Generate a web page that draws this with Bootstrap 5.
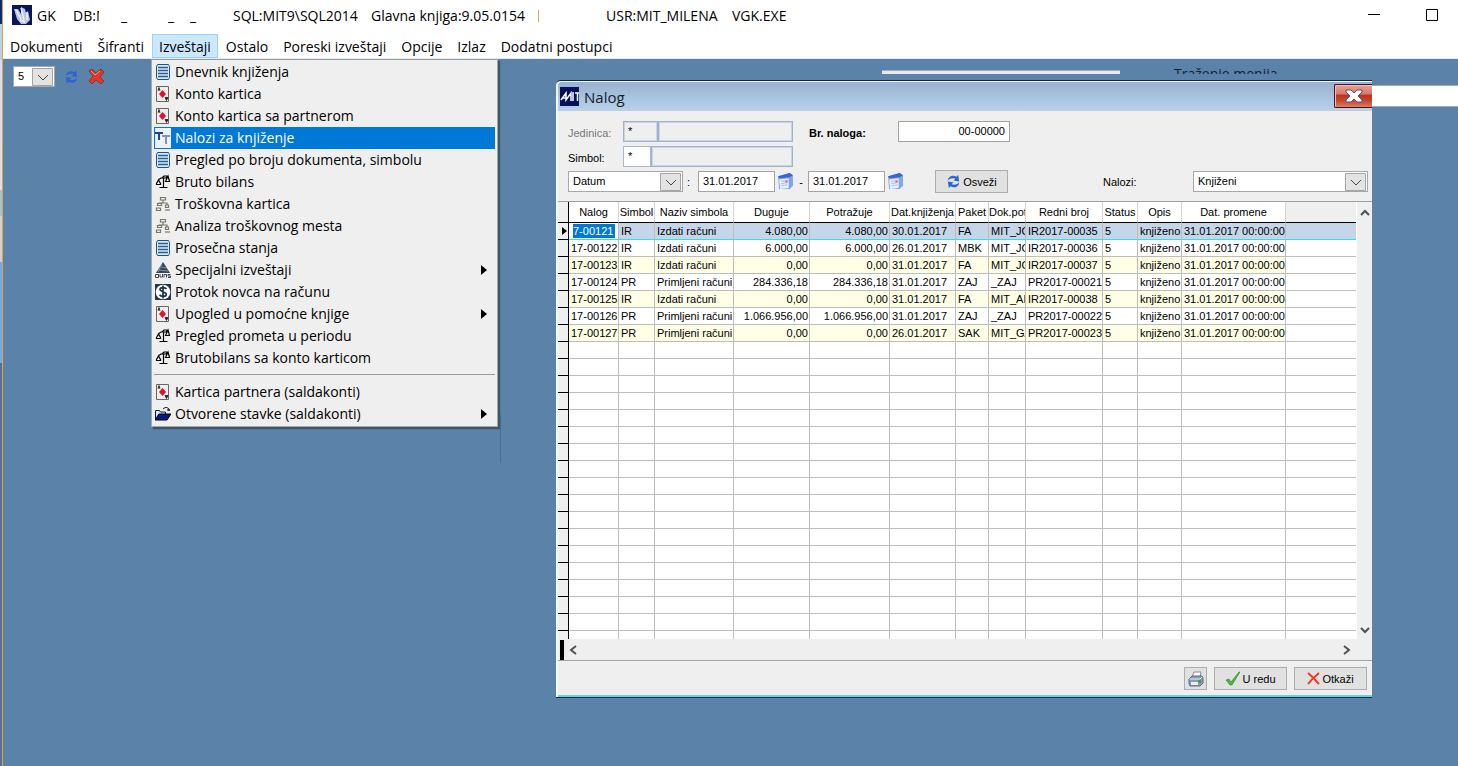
<!DOCTYPE html>
<html lang="sr-Latn">
<head>
<meta charset="utf-8">
<meta name="viewport" content="width=device-width, initial-scale=1">
<title>GK</title>
<link rel="stylesheet" href="https://cdn.jsdelivr.net/npm/bootstrap@5.3.0/dist/css/bootstrap.min.css">
<style>
:root{--desk:#5b82a8;--face:#efefef}
body{font-family:"Open Sans","Noto Sans",sans-serif;font-size:14px;line-height:20px;color:#000;background:#fff}
button,select,input{font:inherit;color:inherit;border-radius:0}
.edge{width:3px;flex:none;border-right:1px solid #d9a455;background:linear-gradient(#0b2a6b 0 24px,#c3cde0 24px 60px,#dcdcea 60px 145px,#e3e0da 145px 190px,#a8c4c8 190px 216px,#d8d0c8 216px 262px,#79a7dc 262px 363px,#5a6f8a 363px)}
.titlebar{height:34px;padding-left:9px}
.titletext{display:grid;grid-template-columns:36px 48px 47px 22px 43px 138px 167px 68px 126px auto;white-space:nowrap;padding-left:5px;padding-top:1px}
.titletext>span{overflow:hidden}
.cutoff{width:26px}
.bar-mark{width:1px;height:12px;background:#d9a455;align-self:center}
.menubar{height:25px;border-bottom:1px solid #dfeaf4;gap:1px}
.menubar button{border:1px solid transparent;background:none;padding:1px 6px 0;height:24px;line-height:22px;white-space:nowrap}
.menubar button.opened{background:#cce8ff;border-color:#99d1ff}
.desk{background:var(--desk);overflow:hidden}
.tools{padding:7px 10px;gap:7px}
.tools .drop{width:42px}
.tools button{border:0;background:none;padding:0;width:18px;height:18px;line-height:0}
.drop{appearance:none;border:1px solid #a8a8a8;background:#fff url("data:image/svg+xml,%3Csvg xmlns='http://www.w3.org/2000/svg' width='21' height='18'%3E%3Cpath d='M.5.5h20v17H.5z' fill='%23e3e3e3' stroke='%23a5a5a5'/%3E%3Cpath d='M6 7l5 5 5-5' fill='none' stroke='%23444'/%3E%3C/svg%3E") no-repeat right 1px center;height:21px;padding:0 24px 0 4px;font-size:11px;line-height:17px;font-family:"Liberation Sans",Arial,sans-serif}
.pop{position:absolute;left:148px;top:0;width:347px;z-index:5;background:var(--face);border:1px solid #a3a9af;border-top-color:#999;box-shadow:2px 2px 1px #40556a;padding:1px 2px}
.pop button{display:flex;align-items:center;width:100%;height:22px;border:0;background:none;padding:0 8px 0 1px;text-align:left;white-space:nowrap}
.pop button>svg:first-child{margin-right:4px;flex:none}
.pop button.picked{background:#0078d7;color:#fff}
.pop hr{margin:5px 0 6px;border:0;border-top:1px solid #999;opacity:1;color:#999}
.behind{position:absolute;left:879px;right:0;top:0;height:15px;overflow:hidden;font-size:14px;line-height:18px}
.behind i{width:238px;height:4px;margin-top:11px;background:#e8e8f0;border-top:1px solid #aaa;margin-right:54px}
.behind span{margin-top:6px;color:#102030}
.search{position:absolute;right:0;top:26px;width:130px;height:22px;border:1px solid #a8a8a8;border-right:0;background:#fff}
.tick{position:absolute;left:497px;top:356px;width:1px;height:48px;background:#4a6f94}
.dlg{position:absolute;left:553px;right:86px;top:21px;bottom:68px;z-index:2;background:var(--face);border:1px solid #10263f;border-left:0;border-right:0;border-top-left-radius:5px;box-shadow:inset 2px 1px #f4f8fc,inset 0 -2px #66d4df;padding:1px 0 2px 2px;font-family:"Liberation Sans",Arial,sans-serif;font-size:11px;line-height:16px}
.dlg header{height:29px;flex:none;background:linear-gradient(#98b2d0,#b9d1ea);border-top-left-radius:4px;font:15px/20px "Open Sans","Noto Sans",sans-serif;color:#14202e;padding-left:2px}
.dlg header h1{font:inherit;margin:0 0 0 5px}
.closer{margin:2px 0 4px auto;width:38px;height:24px;border:1px solid #431422;border-right:0;border-radius:2px 0 0 2px;background:linear-gradient(#e9a396,#d9766a 42%,#bb3322 45%,#c5452d 70%,#dd7b5c);padding:0;line-height:0;box-shadow:inset 1px 1px #f3c0b6}
.ask{padding:10px 4px 9px 10px}
.ask input{height:21px;border:1px solid #a3a3a3;padding:0 4px 2px;background:#fff}
.ask input.flat{background:var(--face);border:1px solid #9fb2c8;box-shadow:inset 0 0 0 1px #c9d5e2}
.ask input.thin{border-color:#aab8c8}
.caption{width:55px;flex:none;padding-top:4px}
.btn-old{border:1px solid #adadad;background:#e1e1e1;padding:0;height:23px;display:flex;align-items:center;justify-content:center;gap:2px}
.gridbox{min-height:0;overflow:hidden;background:#fff;border-top:1px solid #a0a0a0}
.gridbox table{table-layout:fixed;border-collapse:separate;border-spacing:0;width:100%;margin:0}
.gridbox th,.gridbox td{height:17px;padding:0 0 0 2px;line-height:16px;border-right:1px solid #bdbdbd;border-bottom:1px solid #bdbdbd;overflow:hidden;white-space:nowrap}
.gridbox th{height:21px;font-weight:400;text-align:center;border-bottom:1px solid #000;border-right-color:#d5d5d5;padding:0}
.gridbox th.nothing{background:var(--face)}
.gridbox tr>:first-child{background:var(--face);border-right:1px solid #000;border-bottom-color:#000;padding:0 0 0 3px;line-height:0}
.gridbox tr>:last-child{border-right:0}
.gridbox td.sum{text-align:right;padding-right:1px}
.gridbox tbody tr:nth-child(2n+1).rec>td:not(:first-child):not(:last-child){background:#ffffe6}
.gridbox tbody tr.rec.now>td:not(:first-child){background:#c6d6e9!important;border-bottom-color:#27e4ee}
.gridbox tbody tr.rec.now>td:nth-child(2){background:#fff!important;padding-left:3px}
.now span{display:block;width:42px;margin-left:1px;background:#0078d7;color:#fff;line-height:14px}
.vbar{width:15px;flex:none;background:var(--face);padding:7px 0 5px;margin-left:1px}
.hbar{height:22px;flex:none;background:var(--face);border-bottom:1px solid #a0a0a0;padding-left:2px;margin-bottom:1px}
.hbar b{width:4px;height:20px;background:#000;margin-right:5px}
.vbar button,.hbar button{border:0;background:none;padding:0;line-height:0}
.acts{padding:5px;gap:7px;flex:none}
</style>
</head>
<body>
<svg class="d-none" aria-hidden="true">
<symbol id="list" viewBox="0 0 16 16"><path d="M2.500.5h11l1 2v11l-1 2h-11l-1-2v-11z" fill="#d7e8f8" stroke="#23507f"/><path d="M3 3.500h10M3 6.500h10M3 9.500h10M3 12.500h10" stroke="#2e5e92" stroke-width="1.400"/></symbol>
<symbol id="playing" viewBox="0 0 16 16"><path d="M1.500.5h12v15h-12z" fill="#eee" stroke="#666"/><path d="M7.500 4l3.500 4-3.500 4L4 8z" fill="#e4102a"/><path d="M3 4.500l1-3 1 3M10 11.500h3l-1.500 3z" fill="#222" stroke="#222" stroke-width=".8"/></symbol>
<symbol id="scale" viewBox="0 0 16 16"><path d="M8.500 4v9M4.500 13.500h8M3 6l3-2h5l2-2M1.500 9.500L3.500 6l2 3.500v1h-4zM10.500 7.500L13 2l1.500 5.500zM7 4l2-2h3" fill="none" stroke="#000" stroke-width="1.200"/></symbol>
<symbol id="tree" viewBox="0 0 16 16"><g fill="#eee" stroke="#77786a" stroke-width="1.200"><path d="M8 4v3M4 10V7h8v3" fill="none"/><path d="M5.500 1.500h5v2.500h-5zM2.500 7.500h4v2h-4zM10.500 9h3v2.500h-3zM1.500 12h4v2.500h-4z"/><path d="M10 14h5"/></g></symbol>
<symbol id="sync" viewBox="0 0 16 16"><path d="M2 7c0-4 5-7 9-4l2-2 1 7-6-1 2-2C7 4 4 5 2 7zM14 9c0 4-5 7-9 4l-2 2-1-7 6 1-2 2c3 1 6 0 8-2z" fill="#2668d2"/></symbol>
<symbol id="cal" viewBox="0 0 16 16"><path d="M1 3l11-3 3 2v10l-3 3H2z" fill="#7fa5ea"/><path d="M1 3l11-3 3 2-3 2-10 1z" fill="#3a63d2"/><path d="M2 6l9-1v9l-8 1z" fill="#e8f0ff"/><path d="M4 8l6-1M4 10l6-1M4 12l6-1" stroke="#afc3ed"/><path d="M8 7h2v2H8z" fill="#e0696b"/></symbol>
</svg>
<div class="d-flex vh-100">
<div class="edge"></div>
<div class="d-flex flex-column flex-grow-1" style="min-width:0">
  <div class="titlebar d-flex align-items-center pb-1">
    <svg class="flex-shrink-0" width="20" height="20"><path fill="#07155c" d="M0 0h20v20H0z"/><path d="M2 4l4 0 3 5 0-7 4 2 1 4 2-2 2 9-4 4H9L5 14z" fill="#b7c4e3"/><path d="M4 5l5 9M9 3l3 12M15 7l0 8M8 15l5 2" stroke="#eef2fb" stroke-width="1.400"/></svg>
    <div class="titletext">
      <span>GK</span><span><span class="cutoff d-block overflow-hidden">DB:M</span></span><span>_</span><span>_</span><span>_</span><span>SQL:MIT9\SQL2014</span><span>Glavna knjiga:9.05.0154</span><span class="bar-mark"></span><span>USR:MIT_MILENA</span><span>VGK.EXE</span>
    </div>
    <svg class="ms-auto me-3 flex-shrink-0" width="74" height="14"><path d="M0 6.500h12M58.500 1.500h11v11h-11z" fill="none" stroke="#000"/></svg>
  </div>
  <nav class="menubar d-flex">
    <button>Dokumenti</button><button>Šifranti</button><button class="opened">Izveštaji</button><button>Ostalo</button><button>Poreski izveštaji</button><button>Opcije</button><button>Izlaz</button><button>Dodatni postupci</button>
  </nav>
  <main class="desk position-relative flex-grow-1">
    <div class="tools d-flex align-items-center">
      <select class="drop" aria-label="Broj"><option>5</option></select>
      <button aria-label="Osveži"><svg width="15" height="16"><use href="#sync"/></svg></button>
      <button aria-label="Zatvori"><svg width="17" height="17"><path d="M1 3l3-2 4 4 5-4 3 3-4 5 4 4-3 3-5-4-4 4-3-3 4-5z" fill="#e0382c" stroke="#8e2420" stroke-width=".8"/><path d="M3 3l4 4 5-4" fill="none" stroke="#f49a90"/></svg></button>
    </div>
    <div class="tick"></div>
    <div class="behind d-flex"><i></i><span>Traženje menija</span></div>
    <input class="search" aria-label="Traženje menija">

    <div class="pop">
      <button><svg width="16" height="16"><use href="#list"/></svg>Dnevnik knjiženja</button>
      <button><svg width="16" height="16"><use href="#playing"/></svg>Konto kartica</button>
      <button><svg width="16" height="16"><use href="#playing"/></svg>Konto kartica sa partnerom</button>
      <button class="picked"><svg width="16" height="20"><path fill="#eef1f8" d="M0 0h16v20H0z"/><path d="M0 4h8v2H5v6H3V6H0z" fill="#20409c"/><path d="M7 7h8v2h-3v7h-2V9H7z" fill="#7d90c8"/></svg>Nalozi za knjiženje</button>
      <button><svg width="16" height="16"><use href="#list"/></svg>Pregled po broju dokumenta, simbolu</button>
      <button><svg width="16" height="16"><use href="#scale"/></svg>Bruto bilans</button>
      <button><svg width="16" height="16"><use href="#tree"/></svg>Troškovna kartica</button>
      <button><svg width="16" height="16"><use href="#tree"/></svg>Analiza troškovnog mesta</button>
      <button><svg width="16" height="16"><use href="#list"/></svg>Prosečna stanja</button>
      <button><svg width="16" height="16"><path d="M8 0l7 11H1z" fill="#31465a"/><path d="M6 5l6 1M4 8l9 1M7 2l-4 8" stroke="#9fb0be" stroke-width=".7"/><path d="M.5 12.500v3h3v-3zM5 12v3h2.500v-3M9 15.500v-3h2.500v3M15.500 12.500H13v1.500h2.500v1.500H13" fill="none" stroke="#444"/></svg>Specijalni izveštaji<svg class="ms-auto" width="6" height="10"><path d="M0 0l6 5-6 5z"/></svg></button>
      <button><svg width="16" height="16"><path fill="#233846" d="M0 0h16v16H0z"/><circle cx="8" cy="8" r="7.300" fill="#fff"/><path d="M11.500 5C10 3 5 3.200 5 5.600S11.300 7.500 11.300 10.300 6 13 4.500 10.800M8 1.500v13" fill="none" stroke="#1c3040" stroke-width="1.700"/></svg>Protok novca na računu</button>
      <button><svg width="16" height="16"><use href="#playing"/></svg>Upogled u pomoćne knjige<svg class="ms-auto" width="6" height="10"><path d="M0 0l6 5-6 5z"/></svg></button>
      <button><svg width="16" height="16"><use href="#scale"/></svg>Pregled prometa u periodu</button>
      <button><svg width="16" height="16"><use href="#scale"/></svg>Brutobilans sa konto karticom</button>
      <hr>
      <button><svg width="16" height="16"><use href="#playing"/></svg>Kartica partnera (saldakonti)</button>
      <button><svg width="16" height="16"><path d="M.5 13.500v-9h4l1 1.500h5v2" fill="#d8e4f0" stroke="#101838"/><path d="M0 14l4-6h12l-4 6z" fill="#071a80" stroke="#000"/><path d="M8 3c2-2 4-2 6 0v2m-2-1h3" fill="none" stroke="#000"/></svg>Otvorene stavke (saldakonti)<svg class="ms-auto" width="6" height="10"><path d="M0 0l6 5-6 5z"/></svg></button>
    </div>

    <section class="dlg d-flex flex-column">
      <header class="d-flex align-items-center">
        <svg width="19" height="19"><path fill="#050f5c" d="M0 0h19v19H0z"/><path d="M1 13l5-7v7l5-7v8M13 5v9M15 6h4M17.500 6v8M3 11h5" fill="none" stroke="#fff" stroke-width="1.500"/></svg>
        <h1>Nalog</h1>
        <button class="closer" aria-label="Zatvori"><svg width="18" height="16"><path d="M1 2h5l3 3 3-3h5v2l-4 4 4 4v2h-5l-3-3-3 3H1v-2l4-4-4-4z" fill="#fff" stroke="#555566"/></svg></button>
      </header>
      <form class="ask d-flex flex-column gap-1" onsubmit="return false">
        <div class="d-flex">
          <label class="caption" for="unit" style="color:#777">Jedinica:</label>
          <input class="flat" id="unit" value="*" style="width:35px"><input class="flat" aria-label="Naziv jedinice" style="width:135px">
          <label class="fw-bold ms-3 pt-1" for="num" style="width:89px">Br. naloga:</label>
          <input class="text-end" id="num" value="00-00000" style="width:112px">
        </div>
        <div class="d-flex">
          <label class="caption" for="sym">Simbol:</label>
          <input class="thin" id="sym" value="*" style="width:28px"><input class="flat" aria-label="Naziv simbola" style="width:142px">
        </div>
        <div class="d-flex align-items-center" style="height:21px">
          <select class="drop" aria-label="Vrsta datuma" style="width:115px"><option>Datum</option></select>
          <span style="width:15px" class="ps-1">:</span>
          <input value="31.01.2017" aria-label="Od datuma" style="width:77px">
          <svg style="margin-left:2px" width="17" height="17"><use href="#cal"/></svg>
          <span class="text-center" style="width:14px">-</span>
          <input value="31.01.2017" aria-label="Do datuma" style="width:77px">
          <svg style="margin-left:2px" width="17" height="17"><use href="#cal"/></svg>
          <button class="btn-old" style="width:73px;margin-left:31px"><svg width="15" height="15"><use href="#sync"/></svg>Osveži</button>
          <label class="ms-auto" for="kind" style="width:90px">Nalozi:</label>
          <select class="drop" id="kind" style="width:175px"><option>Knjiženi</option></select>
        </div>
      </form>
      <div class="gridbox d-flex flex-grow-1">
        <div class="flex-grow-1">
        <table>
          <colgroup><col style="width:11px"><col style="width:50px"><col style="width:36px"><col style="width:79px"><col style="width:76px"><col style="width:80px"><col style="width:66px"><col style="width:33px"><col style="width:37px"><col style="width:77px"><col style="width:35px"><col style="width:44px"><col style="width:104px"><col></colgroup>
          <thead><tr><th></th><th>Nalog</th><th>Simbol</th><th>Naziv simbola</th><th>Duguje</th><th>Potražuje</th><th>Dat.knjiženja</th><th>Paket</th><th>Dok.pot</th><th>Redni broj</th><th>Status</th><th>Opis</th><th>Dat. promene</th><th class="nothing"></th></tr></thead>
          <tbody id="rows">
            <tr class="rec now"><td><svg width="6" height="8"><path d="M1 0l5 4-5 4z"/></svg></td><td><span>7-00121</span></td><td>IR</td><td>Izdati računi</td><td class="sum">4.080,00</td><td class="sum">4.080,00</td><td>30.01.2017</td><td>FA</td><td>MIT_JO</td><td>IR2017-00035</td><td>5</td><td>knjiženo</td><td>31.01.2017 00:00:00</td><td></td></tr>
            <tr class="rec"><td></td><td>17-00122</td><td>IR</td><td>Izdati računi</td><td class="sum">6.000,00</td><td class="sum">6.000,00</td><td>26.01.2017</td><td>MBK</td><td>MIT_JO</td><td>IR2017-00036</td><td>5</td><td>knjiženo</td><td>31.01.2017 00:00:00</td><td></td></tr>
            <tr class="rec"><td></td><td>17-00123</td><td>IR</td><td>Izdati računi</td><td class="sum">0,00</td><td class="sum">0,00</td><td>31.01.2017</td><td>FA</td><td>MIT_JO</td><td>IR2017-00037</td><td>5</td><td>knjiženo</td><td>31.01.2017 00:00:00</td><td></td></tr>
            <tr class="rec"><td></td><td>17-00124</td><td>PR</td><td>Primljeni računi</td><td class="sum">284.336,18</td><td class="sum">284.336,18</td><td>31.01.2017</td><td>ZAJ</td><td>_ZAJ</td><td>PR2017-00021</td><td>5</td><td>knjiženo</td><td>31.01.2017 00:00:00</td><td></td></tr>
            <tr class="rec"><td></td><td>17-00125</td><td>IR</td><td>Izdati računi</td><td class="sum">0,00</td><td class="sum">0,00</td><td>31.01.2017</td><td>FA</td><td>MIT_AN</td><td>IR2017-00038</td><td>5</td><td>knjiženo</td><td>31.01.2017 00:00:00</td><td></td></tr>
            <tr class="rec"><td></td><td>17-00126</td><td>PR</td><td>Primljeni računi</td><td class="sum">1.066.956,00</td><td class="sum">1.066.956,00</td><td>31.01.2017</td><td>ZAJ</td><td>_ZAJ</td><td>PR2017-00022</td><td>5</td><td>knjiženo</td><td>31.01.2017 00:00:00</td><td></td></tr>
            <tr class="rec"><td></td><td>17-00127</td><td>PR</td><td>Primljeni računi</td><td class="sum">0,00</td><td class="sum">0,00</td><td>26.01.2017</td><td>SAK</td><td>MIT_GA</td><td>PR2017-00023</td><td>5</td><td>knjiženo</td><td>31.01.2017 00:00:00</td><td></td></tr>
          </tbody>
        </table>
        </div>
        <div class="vbar d-flex flex-column justify-content-between align-items-center">
          <button aria-label="Gore"><svg width="10" height="7"><path d="M1 6l4-4 4 4" fill="none" stroke="#505050" stroke-width="2"/></svg></button>
          <button aria-label="Dole"><svg width="10" height="7"><path d="M1 1l4 4 4-4" fill="none" stroke="#505050" stroke-width="2"/></svg></button>
        </div>
      </div>
      <div class="hbar d-flex align-items-center">
        <b></b><button aria-label="Levo"><svg width="8" height="10"><path d="M7 1L2 5l5 4" fill="none" stroke="#505050" stroke-width="2"/></svg></button>
        <button class="ms-auto" style="margin-right:21px" aria-label="Desno"><svg width="8" height="10"><path d="M1 1l5 4-5 4" fill="none" stroke="#505050" stroke-width="2"/></svg></button>
      </div>
      <div class="acts d-flex justify-content-end">
        <button class="btn-old" style="width:23px" aria-label="Štampaj"><svg width="16" height="16"><path d="M4 6l2-5h7l-1 6z" fill="#fff" stroke="#889"/><path d="M1 8l3-3h10l1 2v5l-3 3H2l-1-2z" fill="#8c9bb0" stroke="#5d6a80"/><path d="M1.500 8H12l2-2" fill="none" stroke="#e8edf5"/><path d="M3 11h7v3H3z" fill="#e8eef4"/><path d="M10 9h3v3h-3z" fill="#2fae3c"/></svg></button>
        <button class="btn-old" style="width:73px"><svg width="15" height="15"><path d="M1 9l3-1 2 3 8-10h1L7 14H5z" fill="#4fb53c" stroke="#2b8622" stroke-width=".6"/></svg>U redu</button>
        <button class="btn-old" style="width:73px"><svg width="13" height="13"><path d="M1 1c4 3 7 7 11 11M12 1C7 5 4 8 1 12" fill="none" stroke="#ee3a22" stroke-width="2"/></svg>Otkaži</button>
      </div>
    </section>
  </main>
</div>
</div>
<script src="https://cdn.jsdelivr.net/npm/bootstrap@5.3.0/dist/js/bootstrap.bundle.min.js"></script>
<script>
// blank grid lines below the records
document.getElementById('rows').insertAdjacentHTML('beforeend', ('<tr>' + '<td></td>'.repeat(14) + '</tr>').repeat(18));
</script>
</body>
</html>
